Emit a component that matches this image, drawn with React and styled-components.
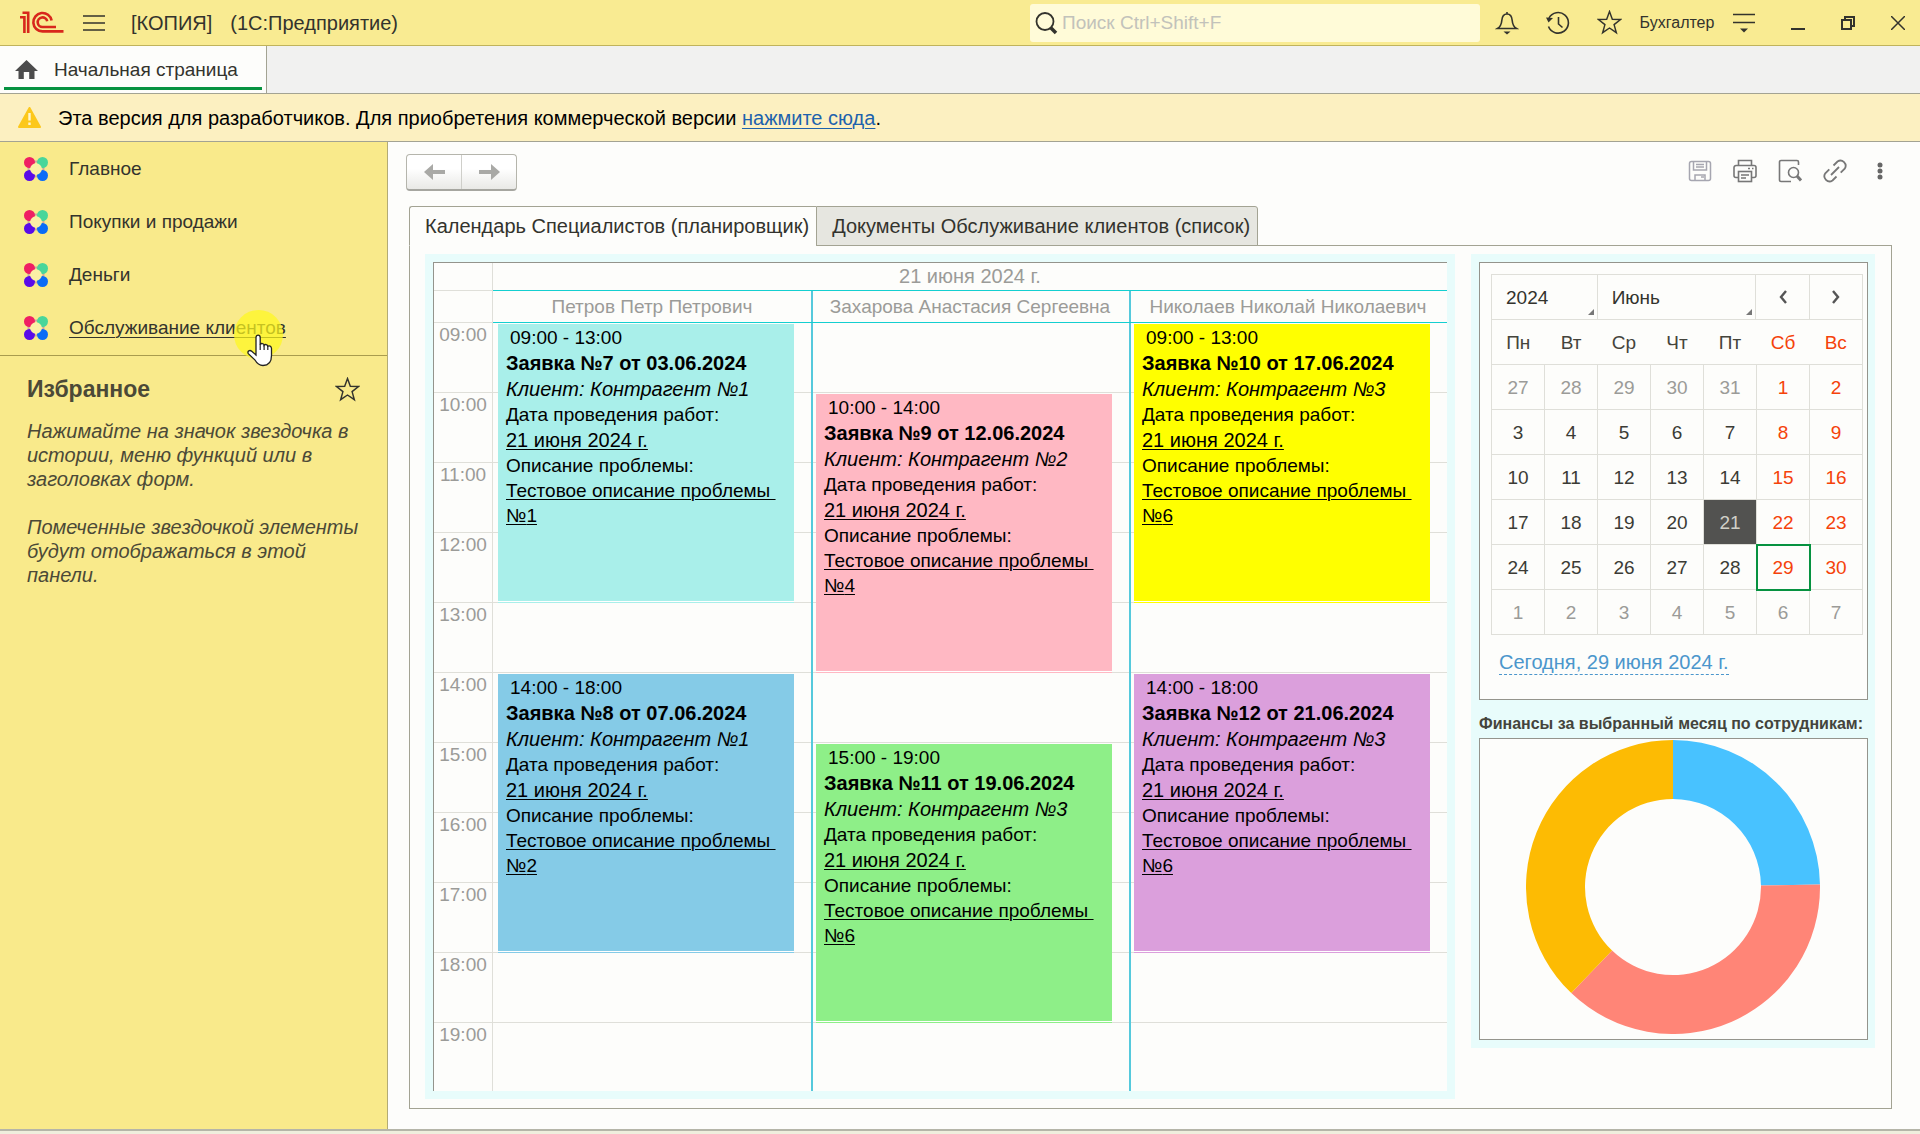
import React from "react";
import styled, { createGlobalStyle, css } from "styled-components";

const c = {
  title: "#f9eb92",
  side: "#f9ea8b",
  notice: "#fcf0c1",
  paper: "#fdfdfb",
  line: "#a3a393",
  frame: "#94948c",
  focus: "#e8fcfb",
  grid: "#dfdfd9",
  teal: "#14cfd0",
  text: "#33332d",
  muted: "#9b9b98",
  red: "#f5420a",
  green: "#069240",
};

const Global = createGlobalStyle`
  *, *::before, *::after { box-sizing: border-box; }
  body {
    margin: 0;
    background: ${c.paper};
    color: ${c.text};
    font-family: "Liberation Sans", Arial, sans-serif;
    font-size: 19px;
    line-height: 24px;
  }
  button, input, select { font: inherit; color: inherit; }
  h2, p { margin: 0; }
`;

const Page = styled.div`
  display: flex;
  flex-direction: column;
  min-height: 100vh;
`;

const TitleBar = styled.header`
  display: flex;
  align-items: center;
  height: 46px;
  padding: 0 6px 0 20px;
  background: ${c.title};
  border-bottom: 1px solid #c0b35c;
`;

const IconButton = styled.button`
  display: flex;
  align-items: center;
  justify-content: center;
  flex: none;
  width: ${(p) => p.$w || 32}px;
  height: 32px;
  padding: 0;
  border: 0;
  background: none;
  color: ${(p) => p.$color || c.text};
`;

const AppName = styled.div`
  display: flex;
  gap: 18px;
  flex: 1;
  padding-left: 7px;
  font-size: 20px;
  white-space: nowrap;
`;

const Search = styled.label`
  display: flex;
  align-items: center;
  gap: 4px;
  width: 450px;
  height: 38px;
  margin-right: 11px;
  padding-left: 4px;
  background: #fffbd8;
  border-radius: 3px;
`;

const SearchInput = styled.input`
  flex: 1;
  min-width: 0;
  padding: 0;
  border: 0;
  outline: 0;
  background: none;
  &::placeholder { color: #c2c2bb; opacity: 1; }
`;

const TitleActions = styled.div`
  display: flex;
  align-items: center;
  gap: ${(p) => p.$gap}px;
`;

const UserName = styled.span`
  width: 94px;
  margin-left: 5px;
  text-align: center;
  font-size: 16px;
`;

const TabBar = styled.nav`
  display: flex;
  height: 48px;
  background: #f1f1f0;
  border-bottom: 1px solid ${c.line};
`;

const HomeTab = styled.a`
  position: relative;
  display: flex;
  align-items: center;
  gap: 16px;
  width: 267px;
  padding-left: 15px;
  background: ${c.paper};
  border-right: 1px solid ${c.line};
  color: inherit;
  text-decoration: none;
  &::after {
    content: "";
    position: absolute;
    inset: auto 4px 3px 4px;
    height: 3px;
    background: ${c.green};
  }
`;

const Notice = styled.div`
  display: flex;
  align-items: center;
  gap: 17px;
  height: 48px;
  padding-left: 18px;
  background: ${c.notice};
  border-bottom: 1px solid ${c.line};
  color: #000;
  font-size: 20px;
  a { color: #1d62ad; text-decoration-thickness: 1px; text-underline-offset: 3px; }
`;

const Body = styled.div`
  display: flex;
  flex: 1;
`;

const Sidebar = styled.aside`
  flex: none;
  width: 388px;
  background: ${c.side};
  border-right: 1px solid #b3ab75;
`;

const Menu = styled.nav`
  padding-bottom: 1px;
  border-bottom: 1px solid #a99c4e;
`;

const MenuItem = styled.a`
  position: relative;
  display: flex;
  align-items: center;
  gap: 21px;
  height: 53px;
  padding-left: 24px;
  color: inherit;
  text-decoration: ${(p) => (p.$hover ? "underline" : "none")};
  text-decoration-thickness: 1px;
  text-underline-offset: 3px;
`;

const Pointer = styled.span`
  position: absolute;
  left: 234px;
  top: 9px;
  width: 49px;
  height: 49px;
  border-radius: 50%;
  background: rgba(253, 248, 30, 0.72);
  svg { position: absolute; left: 13px; top: 24px; }
`;

const Favorites = styled.section`
  padding: 20px 20px 0 27px;
  color: #4b4937;
`;

const FavoritesHead = styled.div`
  display: flex;
  align-items: center;
  justify-content: space-between;
  height: 26px;
  margin-bottom: 17px;
  h2 { font-size: 23px; line-height: 26px; }
`;

const Hint = styled.p`
  font-size: 20px;
  font-style: italic;
  & + & { margin-top: 24px; }
`;

const Main = styled.main`
  flex: 1;
  min-width: 0;
  padding: 12px 28px 20px 21px;
`;

const FormBar = styled.div`
  display: flex;
  align-items: center;
  justify-content: space-between;
  margin-bottom: 15px;
`;

const NavButtons = styled.div`
  display: flex;
  width: 111px;
  height: 37px;
  margin-left: -3px;
  border: 1px solid #b5b5ac;
  border-bottom: 2px solid #a6a6a0;
  border-radius: 4px;
  background: linear-gradient(#fff 40%, #e9e9e6);
`;

const NavButton = styled.button`
  display: flex;
  align-items: center;
  justify-content: center;
  flex: 1;
  padding: 0;
  border: 0;
  background: none;
  color: #a9a9a6;
  & + & { border-left: 1px solid #cfcfca; }
`;

const FormTools = styled.div`
  display: flex;
  align-items: center;
  gap: 13px;
  margin-right: -4px;
  padding-bottom: 3px;
`;

const PageTabs = styled.div`
  display: flex;
`;

const PageTab = styled.button`
  height: 40px;
  margin-bottom: -1px;
  padding: 0 7px 0 15px;
  border: 1px solid ${c.line};
  font-size: 20px;
  white-space: nowrap;
  ${(p) => p.$active
    ? css`
        z-index: 1;
        background: ${c.paper};
        border-bottom-color: ${c.paper};
        border-right: 0;
        border-radius: 3px 0 0 0;
      `
    : css`
        background: #e6e6e0;
        border-radius: 0 3px 0 0;
      `}
`;

const Panel = styled.div`
  display: flex;
  align-items: flex-start;
  gap: 16px;
  padding: 8px 16px 9px 15px;
  border: 1px solid ${c.line};
`;

const FocusBox = styled.section`
  flex: ${(p) => (p.$fixed ? "none" : "1")};
  width: ${(p) => (p.$fixed ? "404px" : "auto")};
  min-width: 0;
  padding: ${(p) => (p.$fixed ? "8px 7px 8px 8px" : "8px")};
  background: ${c.focus};
`;

const Planner = styled.div`
  display: grid;
  grid-template-columns: 59px repeat(3, minmax(0, 1fr));
  grid-template-rows: 28px 32px auto;
  background: ${c.paper};
  border-top: 1px solid ${c.frame};
  border-left: 1px solid ${c.frame};
  color: ${c.muted};
`;

const Corner = styled.div`
  border-right: 1px solid ${c.grid};
  border-bottom: 1px solid ${c.grid};
`;

const DateHead = styled.div`
  grid-column: 2 / -1;
  border-bottom: 1px solid ${c.teal};
  font-size: 20px;
  line-height: 26px;
  text-align: center;
`;

const divider = css`
  box-shadow: ${(p) => (p.$divided ? "inset 2px 0 #55c9dc" : "none")};
`;

const StaffHead = styled.div`
  border-bottom: 1px solid ${c.teal};
  line-height: 31px;
  text-align: center;
  white-space: nowrap;
  ${divider}
`;

const hourLines = css`
  display: grid;
  grid-template-rows: repeat(10, 70px) 68px;
  background: repeating-linear-gradient(transparent 0 69px, ${c.grid} 69px 70px);
`;

const Hours = styled.div`
  ${hourLines}
  border-right: 1px solid ${c.grid};
  text-align: center;
`;

const StaffColumn = styled.div`
  ${hourLines}
  ${divider}
`;

const EventCard = styled.article`
  grid-row: ${(p) => p.$from} / ${(p) => p.$to};
  margin: 1px 17px 2px 5px;
  padding: 1px 0 0 8px;
  background: ${(p) => p.$color};
  box-shadow: 0 1px #fff, 0 2px ${(p) => p.$color};
  color: #000;
  line-height: 25px;
  white-space: nowrap;
`;

const EventTime = styled.div`
  padding-left: 4px;
`;

const EventLine = styled.div`
  font-size: 20px;
  line-height: 26px;
  font-weight: ${(p) => (p.$bold ? "bold" : "normal")};
  font-style: ${(p) => (p.$italic ? "italic" : "normal")};
`;

const Under = styled.span`
  text-decoration: underline;
  text-decoration-thickness: 1px;
  text-underline-offset: 2px;
`;

const CalendarBox = styled.div`
  height: 438px;
  padding: 11px 4px 0 11px;
  background: ${c.paper};
  border: 1px solid ${c.frame};
`;

const CalendarHead = styled.div`
  display: grid;
  grid-template-columns: 2fr 3fr 1fr 1fr;
  height: 45px;
  border: 1px solid ${c.grid};
  border-bottom: 0;
`;

const SelectCell = styled.label`
  position: relative;
  display: flex;
  border-right: 1px solid ${c.grid};
  &::after {
    content: "";
    position: absolute;
    right: 3px;
    bottom: 4px;
    border: 3px solid transparent;
    border-right-color: #777;
    border-bottom-color: #777;
  }
`;

const Select = styled.select`
  flex: 1;
  min-width: 0;
  padding: 2px 0 0 14px;
  border: 0;
  outline: 0;
  appearance: none;
  background: none;
`;

const StepButton = styled.button`
  display: flex;
  align-items: center;
  justify-content: center;
  padding: 0;
  border: 0;
  background: none;
  color: #555;
  & + & { border-left: 1px solid ${c.grid}; }
`;

const Month = styled.table`
  width: 100%;
  border-collapse: collapse;
  table-layout: fixed;
  border: 1px solid ${c.grid};
  text-align: center;
`;

const WeekDay = styled.th`
  height: 45px;
  padding: 2px 0 0;
  font-weight: normal;
  color: ${(p) => (p.$off ? c.red : "#44443c")};
`;

const Day = styled.td`
  height: 45px;
  padding: 2px 0 0;
  border: 1px solid ${c.grid};
  color: ${(p) => (p.$out ? c.muted : p.$off ? c.red : "#3b3b35")};
  ${(p) => p.$selected && css`
    background: #525250;
    background-clip: padding-box;
    color: #d0d0c8;
  `}
  ${(p) => p.$today && css`
    outline: 2px solid ${c.green};
    outline-offset: -1px;
  `}
`;

const TodayLink = styled.a`
  display: inline-block;
  margin: 15px 0 0 8px;
  border-bottom: 1px dashed #4b96cc;
  color: #4b96cc;
  font-size: 20px;
  text-decoration: none;
`;

const ChartTitle = styled.h2`
  height: 38px;
  padding-top: 12px;
  font-size: 16px;
  color: #44443c;
  white-space: nowrap;
`;

const ChartBox = styled.div`
  display: flex;
  align-items: flex-start;
  justify-content: center;
  height: 302px;
  padding: 1px 2px 0 0;
  background: ${c.paper};
  border: 1px solid ${c.frame};
`;

const Footer = styled.footer`
  height: 6px;
  background: #efeedd;
  border-top: 2px solid #b5b5a8;
`;

const Svg = ({ w, h, children, sw = 2, ...rest }) => (
  <svg width={w} height={h} viewBox={`0 0 ${w} ${h}`} fill="none" stroke="currentColor" strokeWidth={sw} aria-hidden="true" {...rest}>
    {children}
  </svg>
);

const Logo = () => (
  <Svg w={44} h={23} stroke="#d8271c" sw={2.6}>
    <path d="M0 6.2H4.4V22M2.5 1.8H8.2V22" />
    <path d="M31.6 9.5A9.2 9.2 0 1 0 22.6 20.4H43.5" />
    <path d="M27.2 10.2A4.8 4.8 0 1 0 22.6 16H36" />
  </Svg>
);

const Star = ({ size }) => (
  <svg width={size} height={size} viewBox="0 0 24 24" fill="none" stroke="currentColor" strokeWidth="1.4" aria-hidden="true">
    <path d="M12 1.5l2.7 7.4 7.9.2-6.2 4.9 2.2 7.8-6.600-4.500-6.600 4.500 2.200-7.800L1.400 9.100l7.900-.2z" />
  </svg>
);

const Section = () => (
  <svg width="24" height="24" viewBox="0 0 24 24" aria-hidden="true">
    <circle cx="12" cy="12" r="7.5" fill="none" stroke="#c9a5a0" strokeWidth="2" />
    <circle cx="5.5" cy="5.5" r="5.5" fill="#ef1f63" />
    <circle cx="18.5" cy="5.5" r="5.5" fill="#49d69a" />
    <circle cx="5.5" cy="18.5" r="5.5" fill="#5a0be8" />
    <circle cx="18.5" cy="18.5" r="5.5" fill="#0a6cf7" />
    <circle cx="12" cy="12" r="5.8" fill="#fbf0a6" />
  </svg>
);

const Hand = () => (
  <svg width="26" height="33" viewBox="0 0 26 33" aria-hidden="true">
    <path
      d="M9 3.5c0-3.3 4.2-3.3 4.2 0v7c.8-1.6 3.7-1.2 3.9.7.9-1.2 3.5-.8 3.7 1 1.3-.9 3.7-.1 3.7 2.2v7.2c0 6-3 9.9-8.500 9.900-4 0-6.200-2.200-8.200-5.700L1.300 19.600c-1.300-2.600 1.500-4 3.400-2.300L9 21z"
      fill="#fff" stroke="#222" strokeWidth="1.3"
    />
    <path d="M13.2 10v6M17.1 11v5M20.8 12v4" stroke="#222" strokeWidth="1.2" />
  </svg>
);

const Slice = ({ from, to, color }) => {
  const at = (deg, r) => {
    const a = ((deg - 90) * Math.PI) / 180;
    return `${147 + r * Math.cos(a)} ${147 + r * Math.sin(a)}`;
  };
  return (
    <path
      fill={color}
      d={`M${at(from, 147)}A147 147 0 0 1 ${at(to, 147)}L${at(to, 88)}A88 88 0 0 0 ${at(from, 88)}Z`}
    />
  );
};

const staff = [
  {
    name: "Петров Петр Петрович",
    events: [
      { from: 1, to: 5, time: "09:00 - 13:00", title: "Заявка №7 от 03.06.2024", client: 1, problem: 1, color: "#a9efea" },
      { from: 6, to: 10, time: "14:00 - 18:00", title: "Заявка №8 от 07.06.2024", client: 1, problem: 2, color: "#85cbe7" },
    ],
  },
  {
    name: "Захарова Анастасия Сергеевна",
    events: [
      { from: 2, to: 6, time: "10:00 - 14:00", title: "Заявка №9 от 12.06.2024", client: 2, problem: 4, color: "#ffb8c3" },
      { from: 7, to: 11, time: "15:00 - 19:00", title: "Заявка №11 от 19.06.2024", client: 3, problem: 6, color: "#8eef88" },
    ],
  },
  {
    name: "Николаев Николай Николаевич",
    events: [
      { from: 1, to: 5, time: "09:00 - 13:00", title: "Заявка №10 от 17.06.2024", client: 3, problem: 6, color: "#ffff00" },
      { from: 6, to: 10, time: "14:00 - 18:00", title: "Заявка №12 от 21.06.2024", client: 3, problem: 6, color: "#db9fdc" },
    ],
  },
];

const hours = Array.from({ length: 11 }, (_, i) => `${String(i + 9).padStart(2, "0")}:00`);
const weekDays = ["Пн", "Вт", "Ср", "Чт", "Пт", "Сб", "Вс"];
const weeks = Array.from({ length: 6 }, (_, w) =>
  Array.from({ length: 7 }, (_, d) => {
    const n = w * 7 + d - 4;
    return { day: n < 1 ? n + 31 : n > 30 ? n - 30 : n, out: n < 1 || n > 30 };
  })
);
const sections = ["Главное", "Покупки и продажи", "Деньги", "Обслуживание клиентов"];

export default function App() {
  return (
    <Page>
      <Global />
      <TitleBar>
        <Logo />
        <IconButton $w={60} aria-label="Меню">
          <Svg w={22} h={18}><path d="M0 2H22M0 9H22M0 16H22" strokeWidth="1.5" /></Svg>
        </IconButton>
        <AppName>
          <span>[КОПИЯ]</span>
          <span>(1С:Предприятие)</span>
        </AppName>
        <Search>
          <Svg w={24} h={24}><circle cx="11" cy="10.5" r="8.5" strokeWidth="1.8" /><path d="M16.5 16.5l5.5 5.5" strokeWidth="3.5" /></Svg>
          <SearchInput type="search" aria-label="Поиск" placeholder="Поиск Ctrl+Shift+F" />
        </Search>
        <TitleActions $gap={19}>
          <IconButton aria-label="Уведомления">
            <Svg w={24} h={24} sw={1.6}>
              <path d="M12 1v2M2.5 17.5c3.5-2 4-4.5 4.3-8C7.1 5.5 8.5 3 12 3s4.9 2.5 5.2 6.5c.3 3.5.8 6 4.3 8z" />
              <path d="M8.5 20.5h7L12 23.5z" fill="currentColor" stroke="none" />
            </Svg>
          </IconButton>
          <IconButton aria-label="История">
            <Svg w={24} h={24} sw={1.6}>
              <path d="M3 7A10.3 10.3 0 1 1 2.5 15.5M12.5 6v7l4 3.5" />
              <path d="M0 6.5l7 .5-4.5 4.5z" fill="currentColor" stroke="none" />
            </Svg>
          </IconButton>
          <IconButton aria-label="Избранное"><Star size={25} /></IconButton>
        </TitleActions>
        <UserName>Бухгалтер</UserName>
        <TitleActions $gap={18}>
          <IconButton $w={40} aria-label="Сервис">
            <Svg w={22} h={20} sw={1.5}><path d="M0 1.5H22M0 9.5H22" /><path d="M7 15.5h8L11 19.5z" fill="currentColor" stroke="none" /></Svg>
          </IconButton>
          <IconButton aria-label="Свернуть"><Svg w={14} h={14}><path d="M0 13H14" /></Svg></IconButton>
          <IconButton aria-label="Восстановить">
            <Svg w={16} h={16}><path d="M2 5h9v9H2zM5 5V2h9v9h-3" /></Svg>
          </IconButton>
          <IconButton aria-label="Закрыть"><Svg w={14} h={14} sw={1.5}><path d="M0 0l14 14M14 0L0 14" /></Svg></IconButton>
        </TitleActions>
      </TitleBar>

      <TabBar>
        <HomeTab href="#home">
          <svg width="23" height="20" viewBox="0 0 23 20" fill="#4c4c4c" aria-hidden="true">
            <path d="M11.5 0L23 11h-3.5v8h-5.3v-7H8.8v7H3.5v-8H0z" />
          </svg>
          Начальная страница
        </HomeTab>
      </TabBar>

      <Notice role="status">
        <svg width="23" height="21" viewBox="0 0 23 21" aria-hidden="true">
          <path d="M11.5 1L22 20H1z" fill="#fcc81c" stroke="#fcc81c" strokeWidth="2" strokeLinejoin="round" />
          <path d="M11.5 6v7.5M11.5 15.5v2.5" stroke="#fff6d0" strokeWidth="2.4" />
        </svg>
        <span>Эта версия для разработчиков. Для приобретения коммерческой версии <a href="#buy">нажмите сюда</a>.</span>
      </Notice>

      <Body>
        <Sidebar>
          <Menu>
            {sections.map((s, i) => (
              <MenuItem key={s} href={`#s${i}`} $hover={i === 3}>
                <Section />
                <span>{s}</span>
                {i === 3 && <Pointer><Hand /></Pointer>}
              </MenuItem>
            ))}
          </Menu>
          <Favorites>
            <FavoritesHead>
              <h2>Избранное</h2>
              <IconButton $w={40} aria-label="Добавить в избранное"><Star size={25} /></IconButton>
            </FavoritesHead>
            <Hint>Нажимайте на значок звездочка в истории, меню функций или в заголовках форм.</Hint>
            <Hint>Помеченные звездочкой элементы будут отображаться в этой панели.</Hint>
          </Favorites>
        </Sidebar>

        <Main>
          <FormBar>
            <NavButtons>
              <NavButton aria-label="Назад"><Svg w={21} h={16} sw={4}><path d="M6 8H21" /><path d="M0 8l9-8v16z" fill="currentColor" stroke="none" /></Svg></NavButton>
              <NavButton aria-label="Вперед"><Svg w={21} h={16} sw={4}><path d="M0 8H15" /><path d="M21 8l-9-8v16z" fill="currentColor" stroke="none" /></Svg></NavButton>
            </NavButtons>
            <FormTools>
              <IconButton $color="#a6a6b0" aria-label="Сохранить">
                <Svg w={24} h={24} sw={1.5}><rect x="1.5" y="2.5" width="21" height="19" rx="2" /><path d="M5.5 3v8h13V3M8 5.5h8M8 8h8M7 21v-5h10v5M13 18h3" /></Svg>
              </IconButton>
              <IconButton $color="#777" aria-label="Печать">
                <Svg w={24} h={24} sw={1.6}><path d="M5.5 6V1.5h13V6M5 18.5H3a2 2 0 0 1-2-2V8.5a2 2 0 0 1 2-2h18a2 2 0 0 1 2 2v8a2 2 0 0 1-2 2h-2M15 9.5h2M19 9.5h1.5" /><rect x="5.5" y="12.5" width="13" height="10" /><path d="M8 16h8M8 19h5" /></Svg>
              </IconButton>
              <IconButton $color="#777" aria-label="Просмотр">
                <Svg w={24} h={24} sw={1.6}><path d="M20.5 6V3a1.5 1.5 0 0 0-1.5-1.5H3A1.5 1.5 0 0 0 1.5 3v18A1.5 1.5 0 0 0 3 22.5h10" /><circle cx="15.5" cy="13.5" r="5" /><path d="M19 17l4 4.5" strokeWidth="3" /></Svg>
              </IconButton>
              <IconButton $color="#777" aria-label="Ссылка">
                <Svg w={24} h={24} sw={1.8}><path d="M8 16l8-8M10.5 6.5l4-4a5.2 5.2 0 0 1 7.2 7.2l-4 4M13.5 17.5l-4 4a5.2 5.2 0 0 1-7.2-7.2l4-4" /></Svg>
              </IconButton>
              <IconButton $color="#666" aria-label="Еще">
                <svg width="6" height="18" viewBox="0 0 6 18" fill="currentColor" aria-hidden="true"><circle cx="3" cy="3" r="2.5" /><circle cx="3" cy="9" r="2.5" /><circle cx="3" cy="15" r="2.5" /></svg>
              </IconButton>
            </FormTools>
          </FormBar>

          <PageTabs role="tablist">
            <PageTab role="tab" aria-selected="true" $active>Календарь Специалистов (планировщик)</PageTab>
            <PageTab role="tab" aria-selected="false">Документы Обслуживание клиентов (список)</PageTab>
          </PageTabs>

          <Panel>
            <FocusBox>
              <Planner>
                <Corner />
                <DateHead>21 июня 2024 г.</DateHead>
                <Corner />
                {staff.map((s, i) => <StaffHead key={s.name} $divided={i > 0}>{s.name}</StaffHead>)}
                <Hours>{hours.map((h) => <span key={h}>{h}</span>)}</Hours>
                {staff.map((s, i) => (
                  <StaffColumn key={s.name} $divided={i > 0}>
                    {s.events.map((e) => (
                      <EventCard key={e.title} $from={e.from} $to={e.to} $color={e.color}>
                        <EventTime>{e.time}</EventTime>
                        <EventLine $bold>{e.title}</EventLine>
                        <EventLine $italic>Клиент: Контрагент №{e.client}</EventLine>
                        <div>Дата проведения работ:</div>
                        <EventLine><Under>21 июня 2024 г.</Under></EventLine>
                        <div>Описание проблемы:</div>
                        <Under>Тестовое описание проблемы&nbsp;<br />№{e.problem}</Under>
                      </EventCard>
                    ))}
                  </StaffColumn>
                ))}
              </Planner>
            </FocusBox>

            <FocusBox $fixed>
              <CalendarBox>
                <CalendarHead>
                  <SelectCell><Select aria-label="Год" defaultValue="2024"><option>2024</option></Select></SelectCell>
                  <SelectCell><Select aria-label="Месяц" defaultValue="Июнь"><option>Июнь</option></Select></SelectCell>
                  <StepButton aria-label="Предыдущий месяц"><Svg w={8} h={14} sw={2.4}><path d="M7 1L2 7l5 6" /></Svg></StepButton>
                  <StepButton aria-label="Следующий месяц"><Svg w={8} h={14} sw={2.4}><path d="M1 1l5 6-5 6" /></Svg></StepButton>
                </CalendarHead>
                <Month>
                  <thead>
                    <tr>{weekDays.map((d, i) => <WeekDay key={d} scope="col" $off={i > 4}>{d}</WeekDay>)}</tr>
                  </thead>
                  <tbody>
                    {weeks.map((week, w) => (
                      <tr key={w}>
                        {week.map(({ day, out }, d) => (
                          <Day key={d} $out={out} $off={d > 4} $selected={!out && day === 21} $today={!out && day === 29}>{day}</Day>
                        ))}
                      </tr>
                    ))}
                  </tbody>
                </Month>
                <TodayLink href="#today">Сегодня, 29 июня 2024 г.</TodayLink>
              </CalendarBox>
              <ChartTitle>Финансы за выбранный месяц по сотрудникам:</ChartTitle>
              <ChartBox>
                <svg width="294" height="294" viewBox="0 0 294 294" role="img" aria-label="Финансы по сотрудникам">
                  <Slice from={0} to={89} color="#48c2ff" />
                  <Slice from={89} to={223.8} color="#ff8577" />
                  <Slice from={223.8} to={360} color="#fdbb03" />
                </svg>
              </ChartBox>
            </FocusBox>
          </Panel>
        </Main>
      </Body>
      <Footer />
    </Page>
  );
}
